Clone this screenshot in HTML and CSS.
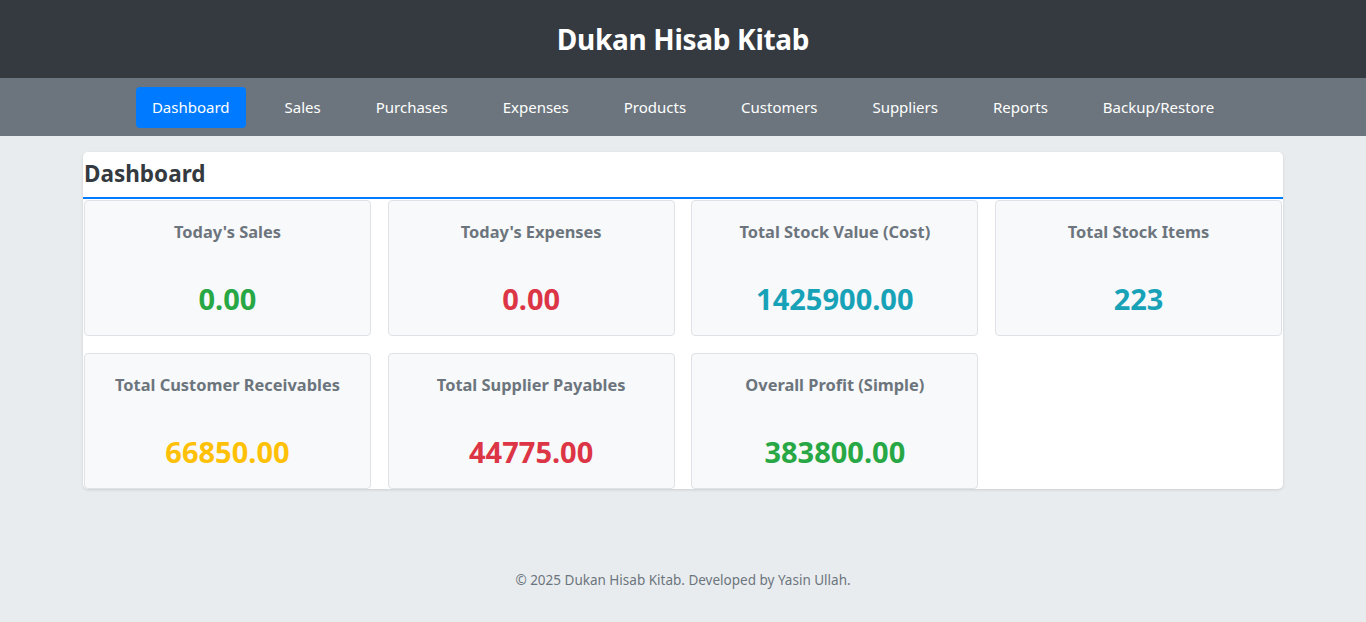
FILE: index.html
```html
<!DOCTYPE html>
<html lang="en">
<head>
<meta charset="utf-8">
<title>Dukan Hisab Kitab</title>
<link rel="stylesheet" href="styles.css">
</head>
<body>
<header class="site-header">
  <h1 class="site-title">Dukan Hisab Kitab</h1>
</header>
<nav class="main-nav">
  <a class="nav-link active" href="#">Dashboard</a>
  <a class="nav-link" href="#">Sales</a>
  <a class="nav-link" href="#">Purchases</a>
  <a class="nav-link" href="#">Expenses</a>
  <a class="nav-link" href="#">Products</a>
  <a class="nav-link" href="#">Customers</a>
  <a class="nav-link" href="#">Suppliers</a>
  <a class="nav-link" href="#">Reports</a>
  <a class="nav-link" href="#">Backup/Restore</a>
</nav>
<main class="container">
  <h2 class="section-title">Dashboard</h2>
  <div class="stats-grid">
    <div class="stat-card">
      <h3 class="stat-label">Today's Sales</h3>
      <p class="stat-value green">0.00</p>
    </div>
    <div class="stat-card">
      <h3 class="stat-label">Today's Expenses</h3>
      <p class="stat-value red">0.00</p>
    </div>
    <div class="stat-card">
      <h3 class="stat-label">Total Stock Value (Cost)</h3>
      <p class="stat-value teal">1425900.00</p>
    </div>
    <div class="stat-card">
      <h3 class="stat-label">Total Stock Items</h3>
      <p class="stat-value teal">223</p>
    </div>
    <div class="stat-card">
      <h3 class="stat-label">Total Customer Receivables</h3>
      <p class="stat-value yellow">66850.00</p>
    </div>
    <div class="stat-card">
      <h3 class="stat-label">Total Supplier Payables</h3>
      <p class="stat-value red">44775.00</p>
    </div>
    <div class="stat-card">
      <h3 class="stat-label">Overall Profit (Simple)</h3>
      <p class="stat-value green">383800.00</p>
    </div>
  </div>
</main>
<footer class="site-footer">
  <p>&copy; 2025 Dukan Hisab Kitab. Developed by Yasin Ullah.</p>
</footer>
</body>
</html>
```

FILE: styles.css
```css
* { box-sizing: border-box; }
html, body { margin: 0; padding: 0; }
body {
  font-family: "Noto Sans", "Open Sans", sans-serif;
  background: #e9ecef;
  color: #343a40;
}
.site-header {
  background: #343a40;
  height: 78px;
  display: flex;
  align-items: center;
  justify-content: center;
}
.site-title {
  margin: 0;
  color: #fff;
  font-size: 28px;
  font-weight: 700;
  letter-spacing: -0.3px;
}
.main-nav {
  background: #6c757d;
  height: 58px;
  display: flex;
  align-items: center;
  justify-content: center;
  gap: 23px;
}
.nav-link {
  color: #fff;
  text-decoration: none;
  font-size: 15px;
  line-height: 21px;
  padding: 10px 16px;
  border-radius: 4px;
}
.nav-link.active { background: #007bff; }
.container {
  width: 1200px;
  margin: 16px auto 0;
  background: #fff;
  border-radius: 5px;
  box-shadow: 0 1px 3px rgba(0,0,0,0.12);
  padding: 0 1px;
  overflow: hidden;
}
.section-title {
  font-size: 22.5px;
  font-weight: 700;
  color: #343a40;
  height: 47px;
  display: flex;
  align-items: center;
  border-bottom: 2px solid #007bff;
  margin: 0 -1px;
  padding: 0 0 3px 1px;
}
.stats-grid {
  display: grid;
  grid-template-columns: repeat(4, 1fr);
  gap: 17px 16.7px;
  padding-top: 1px;
}
.stat-card {
  background: #f8f9fa;
  border: 1px solid #dee2e6;
  border-radius: 4px;
  height: 136px;
  text-align: center;
  padding-top: 20px;
}
.stat-label {
  margin: 0;
  font-size: 16.4px;
  line-height: 22px;
  font-weight: 700;
  color: #6c757d;
}
.stat-value {
  margin: 39px 0 0;
  font-size: 29px;
  line-height: 34px;
  font-weight: 700;
}
.green { color: #28a745; }
.red { color: #dc3545; }
.teal { color: #17a2b8; }
.yellow { color: #ffc107; }
.site-footer {
  text-align: center;
  margin-top: 81px;
}
.site-footer p {
  margin: 0;
  font-size: 13.5px;
  line-height: 20px;
  color: #6c757d;
}
```
